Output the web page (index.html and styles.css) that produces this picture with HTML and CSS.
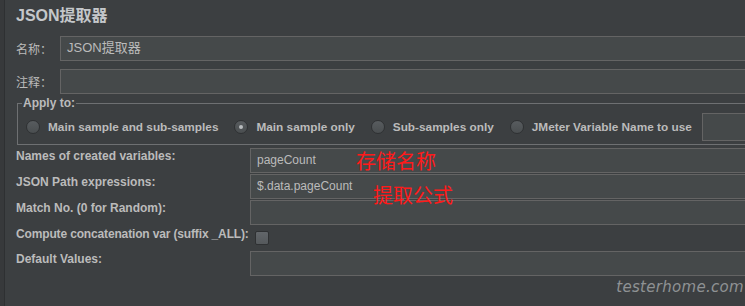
FILE: index.html
```html
<!DOCTYPE html>
<html lang="zh-CN">
<head>
    <meta charset="UTF-8">
    <meta name="viewport" content="width=device-width, initial-scale=1.0">
    <title>JSON提取器</title>
    <link rel="stylesheet" href="styles.css">
</head>
<body>

    <div class="frame">
        <div class="gutter"></div>

        <div class="panel">
            <!-- 标题 -->
            <div class="title">JSON提取器</div>

            <div class="row name-row">
                <span class="cjk-label">名称：</span>
                <div class="field">JSON提取器</div>
            </div>

            <div class="row comment-row">
                <span class="cjk-label">注释：</span>
                <div class="field"></div>
            </div>

            <!-- Apply to -->
            <fieldset class="apply">
                <legend>Apply to:</legend>
                <div class="options">
                    <span class="radio"></span><span class="opt">Main sample and sub-samples</span>
                    <span class="radio checked"></span><span class="opt">Main sample only</span>
                    <span class="radio"></span><span class="opt">Sub-samples only</span>
                    <span class="radio"></span><span class="opt">JMeter Variable Name to use</span>
                    <div class="field var-field"></div>
                </div>
            </fieldset>

            <div class="params">
                <span class="label">Names of created variables:</span>
                <div class="field">pageCount</div>

                <span class="label">JSON Path expressions:</span>
                <div class="field">$.data.pageCount</div>

                <span class="label">Match No. (0 for Random):</span>
                <div class="field"></div>

                <span class="label tight">Compute concatenation var (suffix _ALL):</span>
                <div class="check-cell"><span class="checkbox"></span></div>

                <span class="label">Default Values:</span>
                <div class="field"></div>
            </div>
        </div>
    </div>

    <!-- 标注 -->
    <div class="note note-name">存储名称</div>
    <div class="note note-path">提取公式</div>

    <div class="watermark">testerhome.com</div>

</body>
</html>
```

FILE: styles.css
```css
body {
    background-color: #3c3f41;
    color: #bbbbbb;
    font-family: "Liberation Sans", Arial, "Noto Sans CJK SC", sans-serif;
    font-size: 12px;
    margin: 0;
    width: 745px;
    height: 306px;
    overflow: hidden;
    position: relative;
    white-space: nowrap;
}

.frame {
    display: flex;
    height: 306px;
}

.gutter {
    width: 4px;
    background-color: #37393b;
    border-right: 1px solid #2e3032;
}

.panel {
    flex: 1;
    min-width: 0;
    padding-left: 10px;
    overflow: hidden;
}

.title {
    font-family: "Liberation Sans", "Noto Sans CJK SC", sans-serif;
    font-weight: bold;
    font-size: 16px;
    height: 36px;
    line-height: 32px;
    padding-left: 1px;
    color: #c4c7ca;
}

.row {
    display: flex;
    align-items: center;
    height: 25px;
}

.comment-row {
    margin-top: 8px;
}

.cjk-label {
    font-family: "Noto Sans CJK SC", sans-serif;
    font-size: 12px;
    flex: 0 0 44px;
    padding-left: 1px;
    color: #bbbbbb;
}

/* 文本框右边超出画面，不画右边框 */
.field {
    flex: 1;
    min-width: 0;
    height: 23px;
    background-color: #45494a;
    border: 1px solid #646464;
    border-right: none;
    color: #bbbbbb;
    font-size: 12px;
    line-height: 22px;
    padding-left: 6px;
}

.name-row .field {
    font-family: "Liberation Sans", "Noto Sans CJK SC", sans-serif;
    font-size: 13px;
}

.apply {
    margin: 2px 0 0 2px;
    padding: 0 0 0 8px;
    border: 1px solid #6e7072;
    border-right: none;
    min-width: 0;
}

.apply legend {
    font-weight: bold;
    padding: 0 1px;
    margin-left: -4px;
    line-height: 14px;
}

.options {
    display: flex;
    align-items: center;
    height: 34px;
    font-weight: bold;
    font-size: 11.8px;
}

.radio {
    flex: 0 0 auto;
    width: 12px;
    height: 12px;
    border-radius: 50%;
    border: 1px solid #2f3133;
    background: linear-gradient(#585c5f, #4a4e50);
    display: flex;
    align-items: center;
    justify-content: center;
    margin-right: 8px;
}

.radio.checked::after {
    content: "";
    width: 4px;
    height: 4px;
    border-radius: 50%;
    background-color: #b9bcbe;
}

.opt {
    flex: 0 0 auto;
    margin-right: 16px;
}

.var-field {
    flex: 1;
    height: 26px;
    margin-left: -6px;
}

.params {
    display: grid;
    grid-template-columns: 235px 1fr;
    grid-template-rows: 25px 25px 25px 24px 25px;
    row-gap: 1px;
    margin-top: 3px;
    font-weight: bold;
}

.params .label {
    padding-left: 1px;
    padding-top: 1px;
}

.params .label.tight {
    letter-spacing: -0.15px;
}

.params .field {
    height: 23px;
    font-weight: normal;
}

.check-cell {
    padding-top: 5px;
    padding-left: 5px;
}

.checkbox {
    display: block;
    width: 12px;
    height: 12px;
    border-radius: 2px;
    border: 1px solid #2f3133;
    background: linear-gradient(#62666a, #55595c);
}

.note {
    position: absolute;
    color: #ff1a1a;
    font-family: "Noto Sans CJK SC", sans-serif;
    font-size: 20px;
    line-height: 22px;
}

.note-name {
    left: 356px;
    top: 150px;
}

.note-path {
    left: 373px;
    top: 184px;
}

.watermark {
    position: absolute;
    right: 1px;
    top: 278px;
    font-family: "DejaVu Sans", sans-serif;
    font-style: italic;
    font-size: 15px;
    letter-spacing: 0.3px;
    color: #8f9294;
}
```
